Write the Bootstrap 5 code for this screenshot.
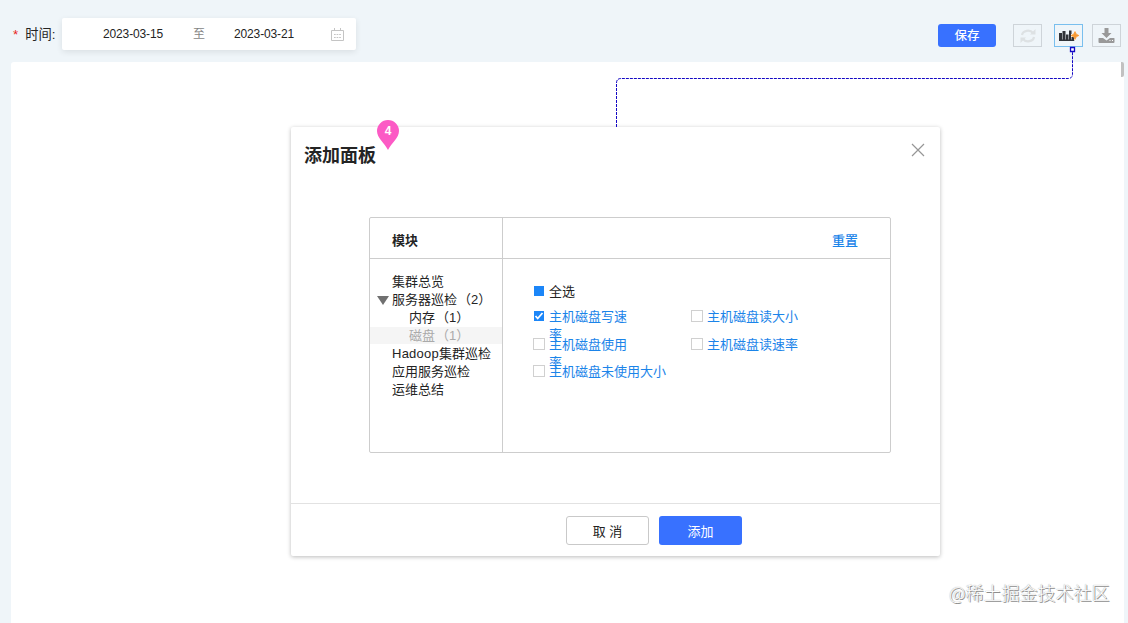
<!DOCTYPE html>
<html lang="zh-CN">
<head>
<meta charset="utf-8">
<meta name="viewport" content="width=device-width, initial-scale=1">
<title>添加面板</title>
<link href="https://cdn.jsdelivr.net/npm/bootstrap@5.3.0/dist/css/bootstrap.min.css" rel="stylesheet">
<style>
body{width:1128px;height:623px;overflow:hidden;background:#eff5f9;color:#242424;font:13px/18px "Liberation Sans","Noto Sans CJK SC",sans-serif}
.toolbar{height:62px;padding:18px 7px 0 13px}
.time-label{font-size:13.300px;line-height:33px;width:49px;white-space:nowrap}
.star{color:#e8231c;margin-right:7px}
.date-range{width:294px;height:32px;box-shadow:0 2px 6px rgba(0,0,0,.09);font-size:12px;letter-spacing:-.14px;border-radius:2px;white-space:nowrap}
.date-range .range-start{margin-left:41px;width:60px}
.date-range .range-sep{margin-left:30px;width:12px;color:#858585}
.date-range .range-end{margin-left:29px;width:60px}
.date-range svg{margin-left:37px}
.btn-blue,.btn-blue:hover{background:#3871ff;color:#fff;border:0}
.save{width:58px;height:23px;font-size:12.5px;font-weight:500;line-height:23px;padding:1px 0 0;border-radius:3px;margin:6px 17px 0 0}
.tool{width:29px;height:23px;border:1px solid #ced4d9;background:transparent;padding:0;margin-top:6px}
.tool-refresh{margin-right:12px}
.tool-chart{margin-right:9px;border-color:#79bfee}
.canvas{margin:0 4px 0 11px;height:561px;border-radius:3px 3px 0 0}
.thumb{position:absolute;right:0;top:0;width:3px;height:15px;background:#c1c1c1;border-radius:0 2px 2px 0}
.connector{position:absolute;left:600px;top:40px;pointer-events:none;z-index:3}
.pane{position:absolute;left:280px;top:65px;width:649px;height:429px;box-shadow:0 1px 4px 0 rgba(0,0,0,.27);border-radius:2px}
.pane-head{height:90px;padding:15px 15px 0 13px}
.pane-head h1{font-size:18px;line-height:26px;font-weight:700;margin:0;padding-top:1px}
.pane-head .close-x{padding:0;border:0;background:none;height:16px;line-height:0}
.pin{position:absolute;left:86px;top:-7px}
.chooser{width:522px;height:236px;margin-left:78px;border:1px solid #cdcdcd;border-radius:2px;display:grid;grid-template:41px 1fr/133px 1fr}
.chooser>*{border-color:#cdcdcd!important}
.th-cell{padding:14px 0 0 22px;font-weight:700}
.th-reset{padding:14px 32px 0 0;color:#1b84e9;font-weight:500}
.tree{padding-top:14px}
.tree li{height:18px;padding-left:22px;white-space:nowrap}
.tree .kid{padding-left:39px}
.tree .picked{background:linear-gradient(#f5f5f5,#f5f5f5) 0 -1px no-repeat;color:#aaa}
.tree .open-node{display:flex;align-items:center;padding-left:7px}
.tree .open-node svg{margin-right:3px}
.tree .count{margin-left:1px}
.tree .latin{letter-spacing:.25px}
.options{padding:23px 0 0 30px}
.all-row{height:25px}
.all-row span,.opt span{padding-top:1px}
.checks{display:grid;grid-template:28px 27px 27px/158px 158px}
.opt{color:#1b84e9;display:flex;align-items:flex-start}
.opt .narrow{width:80px;flex:none}
.box{width:12px;height:12px;border:1px solid #d0d0d0;background:#fff;margin:3px 4px 0 0;flex:none;line-height:0}
.box.full{width:10px;height:10px;border:0;background:#1c86f8;margin:4px 5px 0 1px}
.pane-foot{height:53px;margin-top:50px;border-top:1px solid #e2e2e2;padding-top:12px;padding-left:275px;gap:10px}
.pane-foot .btn{width:83px;height:29px;padding:1px 0 0;font-size:13px;line-height:29px;border-radius:3px}
.pane-foot .cancel{border:1px solid #c9c9c9;color:#222;line-height:27px;background:#fff}
.mark-text{position:absolute;left:938px;top:517px;font:18px/26px "Noto Sans CJK SC",sans-serif;font-weight:300;color:#fff;text-shadow:0 0 1px #888,1px 1px 0 #909090;white-space:nowrap}
</style>
</head>
<body>
<header class="toolbar d-flex align-items-start">
  <div class="time-label"><span class="star">*</span>时间:</div>
  <div class="date-range bg-white d-flex align-items-center">
    <span class="range-start">2023-03-15</span><span class="range-sep">至</span><span class="range-end">2023-03-21</span>
    <svg width="13" height="13" viewBox="0 0 13 13" fill="none" stroke="#c4c4c4"><path d="M.5 2.500h12v10H.5zM3.500 0v3M9.500 0v3"/><path d="M3 6.500h7M3 9.500h7" stroke-dasharray="1.700 .9"/></svg>
  </div>
  <button class="btn btn-blue save ms-auto">保存</button>
  <button class="tool tool-refresh d-flex align-items-center justify-content-center" aria-label="刷新"><svg width="16" height="16" viewBox="0 0 16 16" fill="none" stroke="#dde1e3" stroke-width="2.200"><path d="M2 7a6 5 0 0 1 11-2M14 9a6 5 0 0 1-11 2"/><path d="M10 6.500h5.500V1zM6 9.500H.5V15z" fill="#dde1e3" stroke="none"/></svg></button>
  <button class="tool tool-chart d-flex align-items-center justify-content-center" aria-label="添加图表"><svg width="20" height="14" viewBox="0 0 20 14"><path d="M0 4h3v8H0zM3.500 2h3v10h-3zM7 5.500h2.500V12H7zM10 1.500h2.500V12H10zM13 8h2.500v4H13z" fill="#303338"/><path d="M0 10.500h13V12H0z" fill="#303338"/><path d="M15 1.500h2V5h3v3h-3v3.500h-2V8h-3V5h3z" fill="#fff"/><path d="m16 2.500 1.300 2.700L20 6.500l-2.700 1.300L16 10.500l-1.300-2.700L12 6.500l2.700-1.300z" fill="#f69a36" stroke="#f69a36" stroke-width=".8"/></svg></button>
  <button class="tool d-flex align-items-center justify-content-center" aria-label="下载"><svg width="17" height="17" viewBox="0 0 17 17" fill="#999"><path d="M6.500 1h4v5h3l-5 5-5-5h3zM1 11h4l3.500 2.500L12 11h4q.5 0 .5.500V15q0 1-1 1H1.500q-1 0-1-1v-3.500q0-.5.500-.5z"/><path d="M11.500 13h1v1h-1zM14 13h1v1h-1z" fill="#fff"/></svg></button>
</header>
<main class="canvas bg-white position-relative">
  <div class="thumb"></div>
  <section class="pane bg-white">
    <div class="pane-head d-flex justify-content-between">
      <h1>添加面板</h1>
      <button class="close-x" aria-label="关闭"><svg width="14" height="14" viewBox="0 0 14 14" stroke="#969696" stroke-width="1.200"><path d="m1 1 12 12M13 1 1 13"/></svg></button>
    </div>
    <svg class="pin" width="22" height="31" viewBox="0 0 22 31"><path d="M11 30C7.500 23 0 18 0 11a11 11 0 0 1 22 0c0 7-7.500 12-11 19z" fill="#fc5ac5"/><text x="11" y="15" text-anchor="middle" font-family="Liberation Sans,sans-serif" font-size="12" font-weight="700" fill="#fff">4</text></svg>
    <div class="chooser">
      <div class="th-cell border-end border-bottom">模块</div>
      <div class="th-reset border-bottom text-end">重置</div>
      <ul class="tree list-unstyled m-0 border-end">
        <li>集群总览</li>
        <li class="open-node"><svg width="12" height="9" viewBox="0 0 12 9"><path d="M0 0h12L6 9z" fill="#707070"/></svg>服务器巡检<span class="count">（2）</span></li>
        <li class="kid">内存<span class="count">（1）</span></li>
        <li class="kid picked">磁盘<span class="count">（1）</span></li>
        <li><span class="latin">Hadoop</span>集群巡检</li>
        <li>应用服务巡检</li>
        <li>运维总结</li>
      </ul>
      <div class="options">
        <div class="all-row d-flex"><i class="box full"></i><span>全选</span></div>
        <div class="checks">
          <div class="opt"><i class="box full"><svg width="10" height="10" viewBox="0 0 10 10" fill="none" stroke="#fff" stroke-width="1.800"><path d="m1.500 5 2.200 2.500L8.500 2"/></svg></i><span class="narrow">主机磁盘写速率</span></div>
          <div class="opt"><i class="box"></i><span class="text-nowrap">主机磁盘读大小</span></div>
          <div class="opt"><i class="box"></i><span class="narrow">主机磁盘使用率</span></div>
          <div class="opt"><i class="box"></i><span class="text-nowrap">主机磁盘读速率</span></div>
          <div class="opt"><i class="box"></i><span class="text-nowrap">主机磁盘未使用大小</span></div>
        </div>
      </div>
    </div>
    <div class="pane-foot d-flex">
      <button class="btn cancel">取 消</button>
      <button class="btn btn-blue">添加</button>
    </div>
  </section>
  <div class="mark-text">@稀土掘金技术社区</div>
</main>
<svg class="connector" width="480" height="90" fill="none" stroke="#1408c4"><path d="M16.500 87V43q0-4.500 4.500-4.500h447q4.500 0 4.500-4.500V12" stroke-dasharray="3 1"/><path d="M470.500 7.500h4v4h-4z" fill="#fff" stroke-width="1.300"/></svg>
<script src="https://cdn.jsdelivr.net/npm/bootstrap@5.3.0/dist/js/bootstrap.bundle.min.js"></script>
</body>
</html>
